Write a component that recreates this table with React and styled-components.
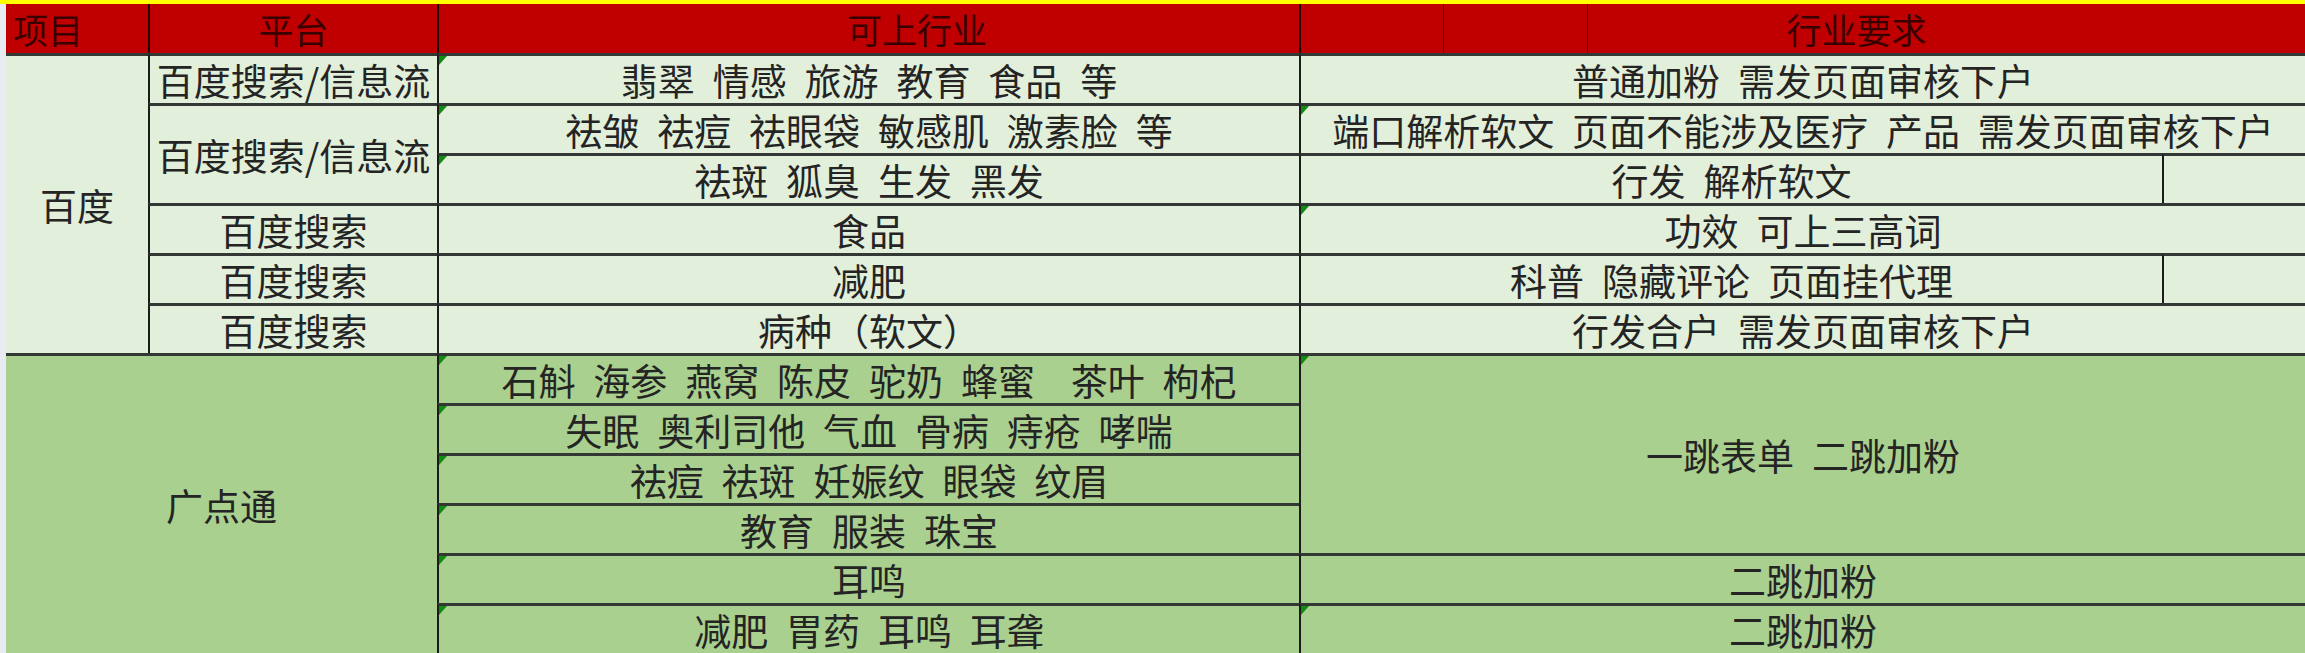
import React from "react";
import styled, { createGlobalStyle } from "styled-components";

const Global = createGlobalStyle`
  html, body { margin: 0; padding: 0; }
  body {
    background: #e8ecf2;
    font-family: "Noto Sans CJK SC", "Noto Sans", sans-serif;
    overflow: hidden;
  }
`;

const Page = styled.div`
  width: 2305px;
  height: 653px;
  display: flex;
  flex-direction: column;
`;

const TopBar = styled.div`
  height: 4px;
  flex: none;
  background: #ffff00;
`;

const Sheet = styled.div`
  margin-left: 6px;
  display: grid;
  grid-template-columns: 142px 289px 862px 144px 144px 575px 143px;
  grid-template-rows: 49px repeat(12, 50px);
  word-spacing: 0.6em;
`;

const tones = {
  head: "#c00000",
  light: "#e2efda",
  green: "#a9d08e",
};

const Cell = styled.div`
  grid-column: ${(p) => p.$c} / span ${(p) => p.$cs || 1};
  grid-row: ${(p) => p.$r} / span ${(p) => p.$rs || 1};
  position: relative;
  box-sizing: border-box;
  display: flex;
  align-items: center;
  justify-content: center;
  padding-top: 1px;
  background: ${(p) => tones[p.$tone]};
  border-top: 3px solid #343834;
  border-left: ${(p) => (p.$c === 1 ? "none" : "2px solid #1c1c1c")};
  white-space: pre;
  font-size: 37px;
  line-height: 44px;
  color: #242424;
`;

const HeadCell = styled(Cell)`
  background: ${tones.head};
  border-top: none;
  border-left: ${(p) =>
    p.$c === 1 ? "none" : p.$thin ? "1px solid #3a0000" : "2px solid #1c0000"};
  color: #3a0000;
  font-size: 35px;
  justify-content: ${(p) => p.$justify || "center"};
  padding-left: ${(p) => p.$pl || 0}px;
  padding-right: ${(p) => p.$pr || 0}px;
`;

const Flag = styled.span`
  position: absolute;
  left: 0;
  top: 0;
  width: 0;
  height: 0;
  border-top: 9px solid #108a10;
  border-right: 8px solid transparent;
`;

const body = [
  // Baidu section
  { c: 1, r: 2, rs: 6, tone: "light", t: "百度" },
  { c: 2, r: 2, tone: "light", t: "百度搜索/信息流" },
  { c: 3, r: 2, tone: "light", t: "翡翠 情感 旅游 教育 食品 等", f: true },
  { c: 4, r: 2, cs: 4, tone: "light", t: "普通加粉 需发页面审核下户" },

  { c: 2, r: 3, rs: 2, tone: "light", t: "百度搜索/信息流" },
  { c: 3, r: 3, tone: "light", t: "祛皱 祛痘 祛眼袋 敏感肌 激素脸 等", f: true },
  { c: 4, r: 3, cs: 4, tone: "light", t: "端口解析软文 页面不能涉及医疗 产品 需发页面审核下户", f: true },

  { c: 3, r: 4, tone: "light", t: "祛斑 狐臭 生发 黑发", f: true },
  { c: 4, r: 4, cs: 3, tone: "light", t: "行发 解析软文" },
  { c: 7, r: 4, tone: "light", t: "" },

  { c: 2, r: 5, tone: "light", t: "百度搜索" },
  { c: 3, r: 5, tone: "light", t: "食品" },
  { c: 4, r: 5, cs: 4, tone: "light", t: "功效 可上三高词", f: true },

  { c: 2, r: 6, tone: "light", t: "百度搜索" },
  { c: 3, r: 6, tone: "light", t: "减肥" },
  { c: 4, r: 6, cs: 3, tone: "light", t: "科普 隐藏评论 页面挂代理" },
  { c: 7, r: 6, tone: "light", t: "" },

  { c: 2, r: 7, tone: "light", t: "百度搜索" },
  { c: 3, r: 7, tone: "light", t: "病种（软文）" },
  { c: 4, r: 7, cs: 4, tone: "light", t: "行发合户 需发页面审核下户" },

  // Guangdiantong section
  { c: 1, r: 8, rs: 6, cs: 2, tone: "green", t: "广点通" },
  { c: 3, r: 8, tone: "green", t: "石斛 海参 燕窝 陈皮 驼奶 蜂蜜  茶叶 枸杞", f: true },
  { c: 4, r: 8, rs: 4, cs: 4, tone: "green", t: "一跳表单 二跳加粉", f: true },
  { c: 3, r: 9, tone: "green", t: "失眠 奥利司他 气血 骨病 痔疮 哮喘", f: true },
  { c: 3, r: 10, tone: "green", t: "祛痘 祛斑 妊娠纹 眼袋 纹眉", f: true },
  { c: 3, r: 11, tone: "green", t: "教育 服装 珠宝", f: true },
  { c: 3, r: 12, tone: "green", t: "耳鸣", f: true },
  { c: 4, r: 12, cs: 4, tone: "green", t: "二跳加粉" },
  { c: 3, r: 13, tone: "green", t: "减肥 胃药 耳鸣 耳聋", f: true },
  { c: 4, r: 13, cs: 4, tone: "green", t: "二跳加粉", f: true },
];

export default function App() {
  return (
    <>
      <Global />
      <Page>
        <TopBar />
        <Sheet>
          <HeadCell $c={1} $r={1} $justify="flex-start" $pl={7}>
            项目
          </HeadCell>
          <HeadCell $c={2} $r={1}>平台</HeadCell>
          <HeadCell $c={3} $r={1} $pl={96}>
            可上行业
          </HeadCell>
          <HeadCell $c={4} $r={1} />
          <HeadCell $c={5} $r={1} $thin />
          <HeadCell $c={6} $r={1} $cs={2} $thin $pr={180}>
            行业要求
          </HeadCell>
          {body.map((d, i) => (
            <Cell
              key={i}
              $c={d.c}
              $r={d.r}
              $cs={d.cs}
              $rs={d.rs}
              $tone={d.tone}
            >
              {d.f && <Flag />}
              {d.t}
            </Cell>
          ))}
        </Sheet>
      </Page>
    </>
  );
}
